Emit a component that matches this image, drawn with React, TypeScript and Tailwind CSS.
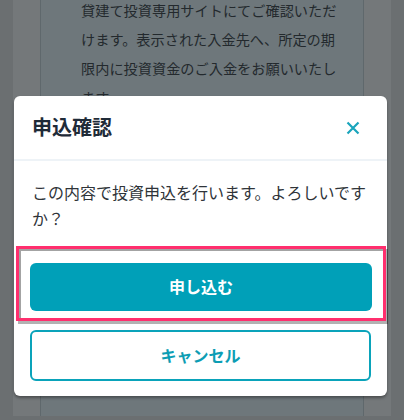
import React from "react";

const font = { fontFamily: '"Noto Sans", "Noto Sans CJK JP", sans-serif' };

function CloseIcon() {
  return (
    <svg width="14" height="14" viewBox="0 0 14 14" fill="none" aria-hidden>
      <path d="M1.5 1.5l11 11M12.5 1.5l-11 11" stroke="#1aa5bc" strokeWidth="2.2" strokeLinecap="butt" />
    </svg>
  );
}

export default function App() {
  return (
    <div className="relative h-[420px] w-full overflow-hidden bg-[#6b6f71]" style={font}>
      {/* 背景のページ（オーバーレイで暗くなっている） */}
      <div className="mx-[13px] h-full bg-[#74787a] px-[27px]">
        <div className="h-full border-x border-[#5f686c] bg-[#6e777b] pl-[40px]">
          <p className="-mt-[4px] text-[14.2px] leading-[29px] text-[#23292d]">
            貸建て投資専用サイトにてご確認いただ
            <br />
            けます。表示された入金先へ、所定の期
            <br />
            限内に投資資金のご入金をお願いいたし
            <br />
            ます。
          </p>
        </div>
      </div>

      {/* 申込確認モーダル */}
      <div className="absolute left-[14px] top-[96px] w-[373px] rounded-md bg-white shadow-[0_2px_3px_rgba(0,0,0,0.35)]">
        <div className="flex h-[65px] items-center justify-between border-b-2 border-[#eef3f7] pl-[18px] pr-[22px]">
          <h2 className="text-[20px] font-bold text-[#1f2b38]">申込確認</h2>
          <button type="button" className="flex h-6 w-6 items-center justify-center">
            <CloseIcon />
          </button>
        </div>

        <p className="px-[18px] pt-[19px] text-[16px] leading-[26px] text-[#2f3439]">
          この内容で投資申込を行います。よろしいですか？
        </p>

        <div className="ml-[2px] mt-[14px] w-[370px] border-[3px] border-[#ff2f6e] px-[11px] pb-[7px] pt-[14px] shadow-[2px_3px_0_rgba(0,0,0,0.3),inset_2px_2px_0_#a3a3a3]">
          <button
            type="button"
            className="flex h-[48px] w-full items-center justify-center rounded-md bg-[#00a0b8] text-[16px] font-bold text-white"
          >
            申し込む
          </button>
        </div>

        <div className="px-[16px] pb-[15px] pt-[9px]">
          <button
            type="button"
            className="flex h-[51px] w-full items-center justify-center rounded-md border-2 border-[#0aa3ba] bg-white text-[16px] font-bold text-[#0c9db4]"
          >
            キャンセル
          </button>
        </div>
      </div>
    </div>
  );
}
